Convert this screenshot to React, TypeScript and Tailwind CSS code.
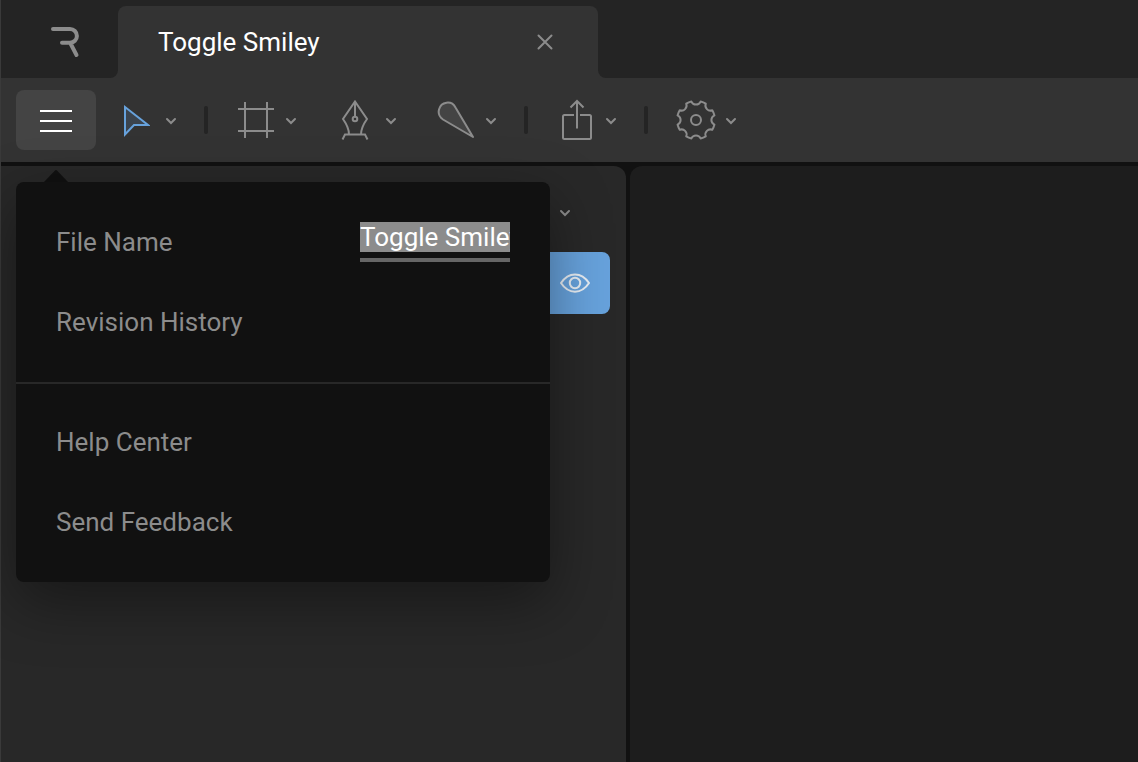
import React, { useState } from "react";

type IconProps = { className?: string };

function gearPath(center: number, radius: number, notch: number): string {
  const half = 14;
  const at = (deg: number) => {
    const a = (deg * Math.PI) / 180;
    return `${(center + radius * Math.sin(a)).toFixed(2)} ${(center - radius * Math.cos(a)).toFixed(2)}`;
  };
  let d = `M${at(-half)}`;
  for (let k = 0; k < 8; k++) {
    d += `A${notch} ${notch} 0 0 0 ${at(k * 45 + half)}`;
    d += `A${radius} ${radius} 0 0 1 ${at((k + 1) * 45 - half)}`;
  }
  return d + "Z";
}

const GEAR = gearPath(20, 19, 5);

function Logo() {
  return (
    <svg width="32" height="32" viewBox="0 0 32 32" fill="none" stroke="#8c8c8c" strokeWidth="4" strokeLinecap="round" strokeLinejoin="round" aria-hidden="true">
      <path d="M4 3H21a6.9 6.9 0 0 1 0 13.8H13M21.500 17.500L27.500 29" />
    </svg>
  );
}

function Chevron({ className }: IconProps) {
  return (
    <svg className={className} width="12" height="8" viewBox="0 0 12 8" fill="none" stroke="#8c8c8c" strokeWidth="2" strokeLinecap="round" aria-hidden="true">
      <path d="M2 2L6 6L10 2" />
    </svg>
  );
}

function SelectIcon() {
  return (
    <svg width="28" height="34" viewBox="0 0 28 34" fill="#3b444e" stroke="#67a2dc" strokeWidth="2" aria-hidden="true">
      <path d="M3 4V31.500L12 22H26Z" />
    </svg>
  );
}

function ArtboardIcon() {
  return (
    <svg width="36" height="36" viewBox="0 0 36 36" fill="none" stroke="#8c8c8c" strokeWidth="2" aria-hidden="true">
      <path d="M7 0V36M29 0V36M0 7H36M0 29H36" />
    </svg>
  );
}

function PenIcon() {
  return (
    <svg className="overflow-visible" width="28" height="40" viewBox="1 0 28 40" fill="none" stroke="#8c8c8c" strokeWidth="2" aria-hidden="true">
      <path d="M8 34.500C8 28.500 5.500 24 2 19L14 1.500L26 19C22.500 24 20 28.500 20 34.500M14 1.500V17M1.500 39.500L4 34.500H24L26.500 39.500" />
      <circle cx="14" cy="19" r="2.300" />
    </svg>
  );
}

function BoneIcon() {
  return (
    <svg width="38" height="38" viewBox="0 0 38 38" fill="#444444" stroke="#8c8c8c" strokeWidth="2" strokeLinejoin="round" aria-hidden="true">
      <path d="M18.500 6.500L36 36L6 18.500C2.500 16 1 12.500 2 8.500C4 0.500 14.500 -1 18.500 6.500Z" />
    </svg>
  );
}

function ExportIcon() {
  return (
    <svg className="overflow-visible" width="32" height="42" viewBox="-1 0 32 42" fill="none" stroke="#8c8c8c" strokeWidth="2" aria-hidden="true">
      <path d="M13 16H3.500Q2 16 2 17.500V38.500Q2 40 3.500 40H28.500Q30 40 30 38.500V17.500Q30 16 28.500 16H19M16 29.500V2M9.500 8.500L16 2L22.500 8.500" />
    </svg>
  );
}

function GearIcon() {
  return (
    <svg width="40" height="40" viewBox="0 0 40 40" fill="none" stroke="#8c8c8c" strokeWidth="2" strokeLinejoin="round" aria-hidden="true">
      <path d={GEAR} />
      <circle cx="20" cy="20" r="5" />
    </svg>
  );
}

function Eye() {
  return (
    <svg width="30" height="20" viewBox="0 0 30 20" fill="none" stroke="#e8eef4" strokeWidth="2" strokeLinejoin="round" aria-hidden="true">
      <path d="M1 10C8.500 -1.500 21.500 -1.500 29 10C21.500 21.500 8.500 21.500 1 10Z" />
      <circle cx="15" cy="10" r="5.200" />
    </svg>
  );
}

function Tool({ label, icon, className }: { label: string; icon: React.ReactNode; className: string }) {
  return (
    <button type="button" aria-label={label} className={`flex h-full shrink-0 items-center ${className}`}>
      <span className="flex w-10 justify-center">{icon}</span>
      <Chevron className="ml-[9px] mt-[2px]" />
    </button>
  );
}

function Separator({ className }: IconProps) {
  return <span role="separator" className={`h-7 w-1 shrink-0 rounded-full bg-[#242424] ${className}`} />;
}

export default function App() {
  const [name, setName] = useState("Toggle Smiley");
  const [open, setOpen] = useState(true);

  return (
    <div className="flex min-h-screen flex-col border-l border-[#3a3a3a] bg-[#111111] font-['Roboto',sans-serif] text-[26px] leading-[30px] text-[#8c8c8c]">
      <header className="flex h-[78px] bg-[#333333]">
        <a href="#home" aria-label="Home" className="flex w-[117px] shrink-0 items-center rounded-br-lg bg-[#242424] pl-12 pt-[6px]">
          <Logo />
        </a>
        <div className="w-[480px] shrink-0 bg-[#242424] pt-[6px]">
          <div className="flex h-full items-center justify-between rounded-t-lg bg-[#333333] pl-10 pr-[45px]">
            <span className="text-white">Toggle Smiley</span>
            <button type="button" aria-label="Close tab">
              <svg width="16" height="16" viewBox="0 0 16 16" fill="none" stroke="#8c8c8c" strokeWidth="2" strokeLinecap="round" aria-hidden="true">
                <path d="M1.500 1.500L14.500 14.500M14.500 1.500L1.500 14.500" />
              </svg>
            </button>
          </div>
        </div>
        <div className="flex-1 rounded-bl-lg bg-[#242424]" />
      </header>

      <nav aria-label="Tools" className="flex h-[84px] items-center bg-[#333333] pl-[15px]">
        <div className="relative z-10 shrink-0">
          <button
            type="button"
            aria-label="Menu"
            aria-expanded={open}
            onClick={() => setOpen(!open)}
            className="flex h-[60px] w-20 items-center justify-center rounded-lg bg-[#444444]"
          >
            <svg width="32" height="24" viewBox="0 0 32 24" stroke="#ffffff" strokeWidth="2" aria-hidden="true">
              <path d="M0 3H32M0 13H32M0 23H32" />
            </svg>
          </button>
          {open && (
            <div className="absolute left-0 top-20 flex w-[534px] flex-col">
              <svg className="ml-7 h-3 w-6" viewBox="0 0 24 12" aria-hidden="true">
                <path d="M0 12L10.800 0.700Q12 -0.500 13.200 0.700L24 12Z" fill="#111111" />
              </svg>
              <div className="rounded-lg bg-[#111111] shadow-[0_20px_60px_rgba(0,0,0,0.4)]">
                <div className="flex flex-col border-b-2 border-[#282828] px-10 pb-5 pt-5">
                  <div className="flex h-20 items-center justify-between">
                    <label htmlFor="file-name">File Name</label>
                    <div className="w-[150px] border-b-4 border-[#666666] pb-[6px]">
                      <input
                        id="file-name"
                        value={name}
                        onChange={(e) => setName(e.target.value)}
                        className="block h-[30px] w-full bg-[#8c8c8c] text-white outline-none"
                      />
                    </div>
                  </div>
                  <button type="button" className="h-20 text-left">Revision History</button>
                </div>
                <div className="flex flex-col px-10 pb-5 pt-[18px]">
                  <button type="button" className="h-20 text-left">Help Center</button>
                  <button type="button" className="h-20 text-left">Send Feedback</button>
                </div>
              </div>
            </div>
          )}
        </div>
        <Tool label="Select" icon={<SelectIcon />} className="ml-5" />
        <Separator className="ml-[27px]" />
        <Tool label="Artboard" icon={<ArtboardIcon />} className="ml-7" />
        <Tool label="Pen" icon={<PenIcon />} className="ml-[39px]" />
        <Tool label="Bone" icon={<BoneIcon />} className="ml-[39px]" />
        <Separator className="ml-[27px]" />
        <Tool label="Export" icon={<ExportIcon />} className="ml-7" />
        <Separator className="ml-[27px]" />
        <Tool label="Settings" icon={<GearIcon />} className="ml-7" />
      </nav>

      <main className="flex flex-1 gap-1 pt-1">
        <aside className="w-[625px] shrink-0 rounded-tr-xl bg-[#282828] px-4 pt-4">
          <div className="flex h-[70px] items-center justify-end pr-[39px]">
            <button type="button" aria-label="Expand">
              <Chevron className="-mt-2" />
            </button>
          </div>
          <div className="flex h-[62px] items-center justify-end rounded-lg bg-[#67a2dc] pr-5">
            <button type="button" aria-label="Toggle visibility">
              <Eye />
            </button>
          </div>
        </aside>
        <section aria-label="Stage" className="flex-1 rounded-tl-xl bg-[#1d1d1d]" />
      </main>
    </div>
  );
}
